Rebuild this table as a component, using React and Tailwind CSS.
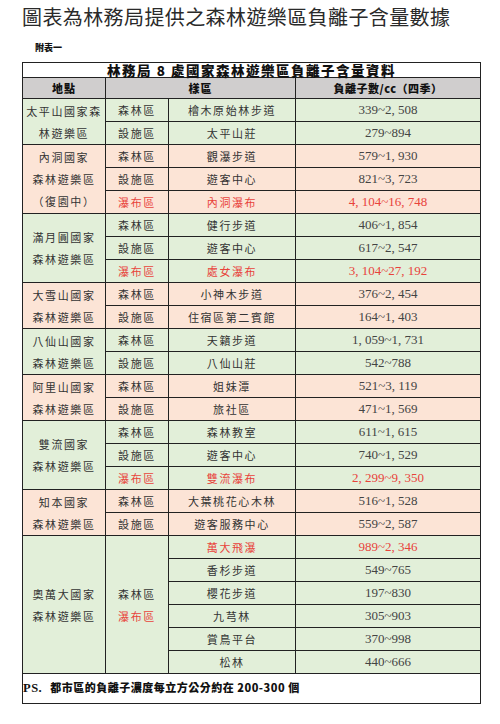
import React from "react";

const G = "bg-[#e2efd9]";
const P = "bg-[#fce4d6]";
const RED = "text-[#e8433b]";

const groups = [
  { name: ["太平山國家森", "林遊樂區"], bg: G, rows: [["森林區", "檜木原始林步道", "339~2, 508"], ["設施區", "太平山莊", "279~894"]] },
  { name: ["內洞國家", "森林遊樂區", "（復園中）"], bg: P, rows: [["森林區", "觀瀑步道", "579~1, 930"], ["設施區", "遊客中心", "821~3, 723"], ["瀑布區", "內洞瀑布", "4, 104~16, 748", true]] },
  { name: ["滿月圓國家", "森林遊樂區"], bg: G, rows: [["森林區", "健行步道", "406~1, 854"], ["設施區", "遊客中心", "617~2, 547"], ["瀑布區", "處女瀑布", "3, 104~27, 192", true]] },
  { name: ["大雪山國家", "森林遊樂區"], bg: P, rows: [["森林區", "小神木步道", "376~2, 454"], ["設施區", "住宿區第二賓館", "164~1, 403"]] },
  { name: ["八仙山國家", "森林遊樂區"], bg: G, rows: [["森林區", "天籟步道", "1, 059~1, 731"], ["設施區", "八仙山莊", "542~788"]] },
  { name: ["阿里山國家", "森林遊樂區"], bg: P, rows: [["森林區", "姐妹潭", "521~3, 119"], ["設施區", "旅社區", "471~1, 569"]] },
  { name: ["雙流國家", "森林遊樂區"], bg: G, rows: [["森林區", "森林教室", "611~1, 615"], ["設施區", "遊客中心", "740~1, 529"], ["瀑布區", "雙流瀑布", "2, 299~9, 350", true]] },
  { name: ["知本國家", "森林遊樂區"], bg: P, rows: [["森林區", "大葉桃花心木林", "516~1, 528"], ["設施區", "遊客服務中心", "559~2, 587"]] },
];

const oman = [
  ["萬大飛瀑", "989~2, 346", true],
  ["香杉步道", "549~765"],
  ["櫻花步道", "197~830"],
  ["九芎林", "305~903"],
  ["賞鳥平台", "370~998"],
  ["松林", "440~666"],
];

const cjk = { fontFamily: '"Noto Sans CJK TC", "Noto Sans CJK SC", sans-serif' };
const num = { fontFamily: '"Liberation Serif", "Noto Sans CJK TC", serif' };

const td = "border border-[#222] text-center align-middle p-0";

export default function App() {
  return (
    <div className="w-[500px] h-[724px] bg-white" style={cjk}>
      <div className="pl-[22px] pt-[4px] text-[20px] leading-[26px] text-[#2a2a2a] tracking-[0.4px]">
        圖表為林務局提供之森林遊樂區負離子含量數據
      </div>
      <div className="pl-[35px] pt-[12px] text-[9px] leading-[12px] font-black text-[#111]">附表一</div>
      <div className="pl-[22px] pt-[8px]">
        <table className="table-fixed border-collapse w-[458px] border-[1.5px] border-[#111] text-[#3a3a3a]">
          <colgroup>
            <col className="w-[83px]" />
            <col className="w-[63px]" />
            <col className="w-[127px]" />
            <col className="w-[185px]" />
          </colgroup>
          <tbody>
            <tr className="h-[14px]">
              <td colSpan={4} className={`${td} bg-white text-[13.5px] leading-[14px] font-black text-[#111] tracking-[1.5px]`}>
                林務局 8 處國家森林遊樂區負離子含量資料
              </td>
            </tr>
            <tr className="h-[21px] bg-[#d0cece]">
              <td className={`${td} text-[11px] font-black text-[#111] tracking-[1px]`}>地點</td>
              <td colSpan={2} className={`${td} text-[11px] font-black text-[#111] tracking-[1px]`}>樣區</td>
              <td className={`${td} text-[11px] font-black text-[#111] tracking-[0.5px]`}>負離子數/cc（四季）</td>
            </tr>
            {groups.map((g, gi) =>
              g.rows.map((r, ri) => {
                const red = r[3];
                return (
                  <tr key={gi + "-" + ri} className={`h-[23px] ${g.bg}`}>
                    {ri === 0 && (
                      <td rowSpan={g.rows.length} className={`${td} text-[11px] leading-[22px] tracking-[1.6px] text-[#333]`}>
                        {g.name.map((l, li) => (
                          <div key={li}>{l}</div>
                        ))}
                      </td>
                    )}
                    <td className={`${td} text-[11px] leading-[22px] tracking-[1.6px] ${red ? RED : "text-[#333]"}`}>{r[0]}</td>
                    <td className={`${td} text-[11px] leading-[22px] tracking-[1.6px] ${red ? RED : "text-[#333]"}`}>{r[1]}</td>
                    <td className={`${td} text-[13px] leading-[22px] ${red ? RED : "text-[#444]"}`} style={num}>
                      {r[2]}
                    </td>
                  </tr>
                );
              })
            )}
            {oman.map((r, ri) => (
              <tr key={"o" + ri} className={`h-[23px] ${G}`}>
                {ri === 0 && (
                  <>
                    <td rowSpan={6} className={`${td} text-[11px] leading-[22px] tracking-[1.6px] text-[#333]`}>
                      <div>奧萬大國家</div>
                      <div>森林遊樂區</div>
                    </td>
                    <td rowSpan={6} className={`${td} text-[11px] leading-[22px] tracking-[1.6px] text-[#333]`}>
                      <div>森林區</div>
                      <div className={RED}>瀑布區</div>
                    </td>
                  </>
                )}
                <td className={`${td} text-[11px] leading-[22px] tracking-[1.6px] ${r[2] ? RED : "text-[#333]"}`}>{r[0]}</td>
                <td className={`${td} text-[13px] leading-[22px] ${r[2] ? RED : "text-[#444]"}`} style={num}>
                  {r[1]}
                </td>
              </tr>
            ))}
            <tr className="h-[30px] bg-white">
              <td colSpan={4} className={`${td} text-left text-[11px] font-black text-[#111] tracking-[0.5px]`}>
                <span style={num} className="text-[12.5px] font-bold">PS.</span>
                <span className="pl-[8px]">都市區的負離子濃度每立方公分約在 200-300 個</span>
              </td>
            </tr>
          </tbody>
        </table>
      </div>
    </div>
  );
}
